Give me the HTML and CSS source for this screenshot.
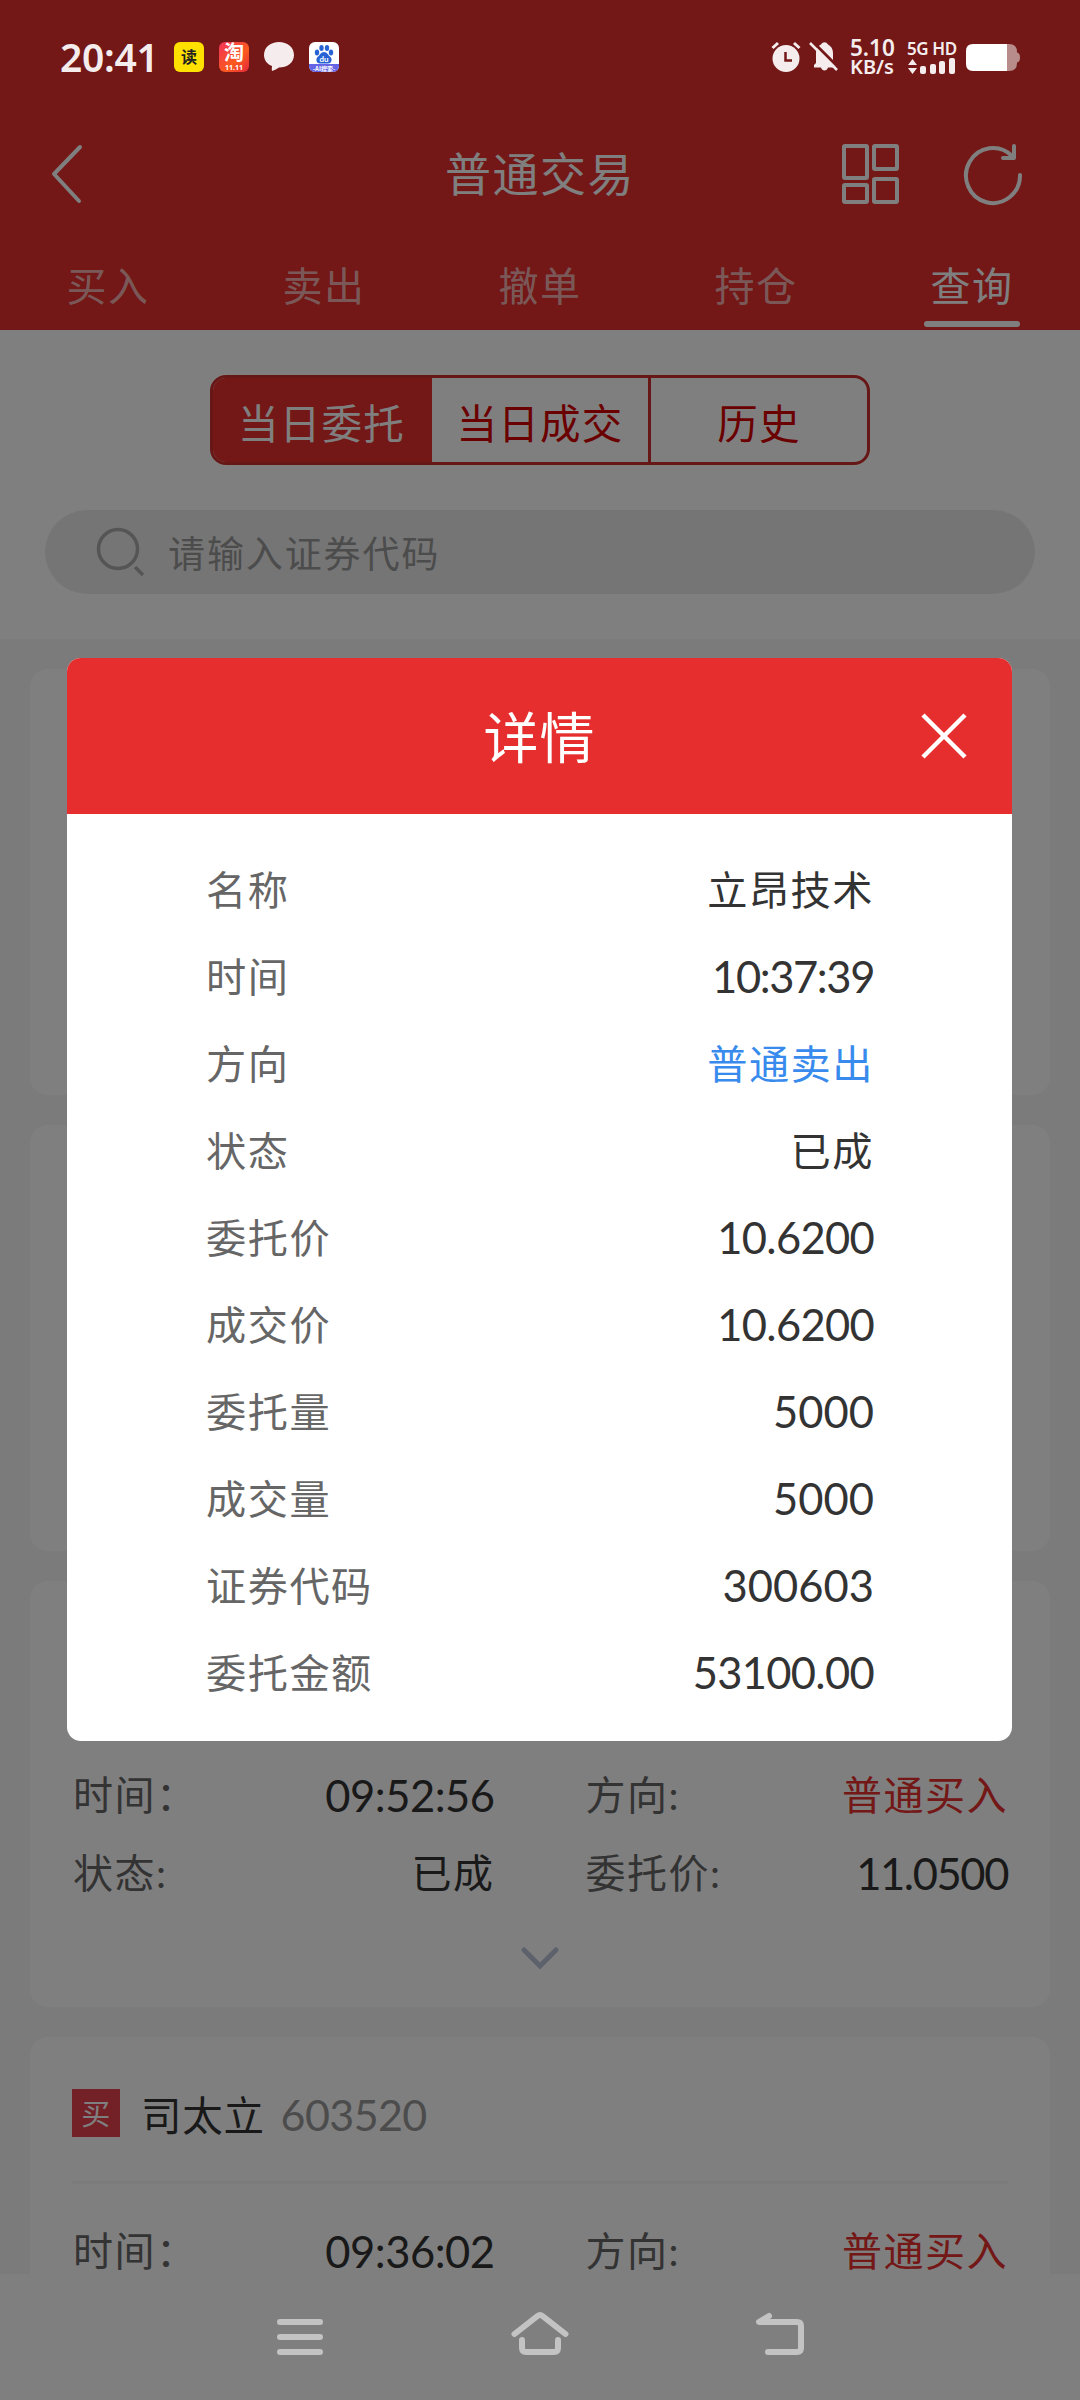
FILE: index.html
```html
<!DOCTYPE html>
<html lang="zh-CN">
<head>
  <meta charset="UTF-8">
  <title>普通交易</title>
  <link rel="stylesheet" href="styles.css">
</head>
<body>
  <div class="screen">
    <header class="header">
      <div class="title-bar">
        <svg class="back" width="40" height="64" viewBox="0 0 40 64"><path d="M33 5L7 32L32 59"/></svg>
        <h1>普通交易</h1>
        <div class="actions">
          <svg width="60" height="64" viewBox="0 0 60 64">
            <rect x="3" y="4" width="23" height="32" rx="1"/>
            <rect x="33" y="4" width="23" height="23" rx="1"/>
            <rect x="3" y="43" width="23" height="17" rx="1"/>
            <rect x="33" y="37" width="23" height="23" rx="1"/>
          </svg>
          <svg width="64" height="64" viewBox="0 0 64 64"><path d="M58 33A27 27.500 0 1 1 50 14M52 4V16H41"/></svg>
        </div>
      </div>
      <nav class="tabs">
        <span>买入</span>
        <span>卖出</span>
        <span>撤单</span>
        <span>持仓</span>
        <span class="active">查询</span>
      </nav>
    </header>

    <section class="filters">
      <div class="segment">
        <span class="active">当日委托</span>
        <span>当日成交</span>
        <span>历史</span>
      </div>
      <div class="search">
        <svg width="50" height="50" viewBox="0 0 50 50"><circle cx="23" cy="22" r="19.500"/><path d="M40 40L48 48"/></svg>
        <span>请输入证券代码</span>
      </div>
    </section>

    <main class="list">
      <div class="card"></div>
      <div class="card"></div>
      <div class="card">
        <div class="card-head"></div>
        <div class="card-body">
          <div class="cell"><span>时间：</span><b class="time">09:52:56</b></div>
          <div class="cell"><span>方向:</span><b class="buy">普通买入</b></div>
          <div class="cell"><span>状态:</span><b>已成</b></div>
          <div class="cell"><span>委托价:</span><b class="num tight">11.0500</b></div>
        </div>
        <div class="more">
          <svg width="44" height="28" viewBox="0 0 44 28"><path d="M6 5L22 21L38 5"/></svg>
        </div>
      </div>
      <div class="card">
        <div class="card-head">
          <i class="badge">买</i><b>司太立</b><span class="code">603520</span>
        </div>
        <div class="card-body">
          <div class="cell"><span>时间：</span><b class="time">09:36:02</b></div>
          <div class="cell"><span>方向:</span><b class="buy">普通买入</b></div>
        </div>
      </div>
    </main>
    <div class="nav-bg"></div>

    <div class="overlay">
      <div class="modal">
        <div class="modal-head">
          <h2>详情</h2>
          <svg class="close" width="50" height="50" viewBox="0 0 50 50"><path d="M4 3L46 45M46 3L4 45"/></svg>
        </div>
        <div class="modal-body">
          <div class="row"><span>名称</span><b>立昂技术</b></div>
          <div class="row"><span>时间</span><b class="time tight">10:37:39</b></div>
          <div class="row"><span>方向</span><b class="sell">普通卖出</b></div>
          <div class="row"><span>状态</span><b>已成</b></div>
          <div class="row"><span>委托价</span><b class="num snug">10.6200</b></div>
          <div class="row"><span>成交价</span><b class="num snug">10.6200</b></div>
          <div class="row"><span>委托量</span><b class="num">5000</b></div>
          <div class="row"><span>成交量</span><b class="num">5000</b></div>
          <div class="row"><span>证券代码</span><b class="num">300603</b></div>
          <div class="row"><span>委托金额</span><b class="num snug">53100.00</b></div>
        </div>
      </div>
    </div>

    <div class="status">
      <span class="clock">20:41</span>
      <div class="apps">
        <i class="app read">读</i>
        <i class="app tao"><span>淘</span><small>11.11</small></i>
        <svg width="30" height="30" viewBox="0 0 30 30"><path d="M15 0C23 0 30 5 30 13S23 25.500 15 25.500Q12 27.500 8 29Q7.500 27 8 24C3 22 0 18 0 13C0 5 7 0 15 0Z" fill="#f5eded"/></svg>
        <svg width="30" height="30" viewBox="0 0 30 30">
          <rect width="30" height="30" rx="6" fill="#fff"/>
          <path d="M0 22H30V24A6 6 0 0 1 24 30H6A6 6 0 0 1 0 24Z" fill="#6564e4"/>
          <g fill="#2863d6">
            <ellipse cx="8" cy="10.500" rx="2.200" ry="3"/><ellipse cx="12.500" cy="6" rx="2.200" ry="3"/>
            <ellipse cx="18" cy="6" rx="2.200" ry="3"/><ellipse cx="22" cy="10.500" rx="2.200" ry="3"/>
            <path d="M15 10C18 10 19 13 21.500 15C24 18 22 22 18.500 21.500H11.500C8 22 6 18 8.500 15C11 13 12 10 15 10Z"/>
          </g>
          <text x="15" y="20" class="du">du</text>
          <text x="15" y="28.500" class="ai">-AI搜索-</text>
        </svg>
      </div>
      <div class="indicators">
        <svg width="30" height="32" viewBox="0 0 30 32">
          <circle cx="15" cy="17.500" r="13.500" fill="#f5eded"/>
          <path d="M1.500 7L7 2M28.500 7L23 2" stroke="#f5eded" stroke-width="3" fill="none"/>
          <path d="M14.500 11V19.500H21" stroke="#731717" stroke-width="2.500" fill="none"/>
        </svg>
        <svg class="bell" width="30" height="32" viewBox="0 0 30 32">
          <path d="M5 26.500V24L7 22V12C7 6 11 4 12 3.500C14 .5 17 .5 19 3.500C22 5 24 8 24 12V22L26.500 24.500V26.500H19C18 30.500 13 30.500 12 26.500Z" fill="#f5eded"/>
          <path d="M4 1L31 28" stroke="#731717" stroke-width="3"/>
          <path d="M1 2L28 29" stroke="#f5eded" stroke-width="2.500"/>
        </svg>
        <div class="speed"><span>5.10</span><span class="unit">KB/s</span></div>
        <div class="net">
          <span>5G HD</span>
          <svg width="48" height="18" viewBox="0 0 48 18" fill="#f5eded">
            <path d="M1 8L5.500 2L10 8ZM1 11L5.500 17L10 11Z"/>
            <rect x="13" y="9" width="6" height="8" rx="2"/><rect x="23" y="7" width="6" height="10" rx="2"/>
            <rect x="32" y="4" width="6" height="13" rx="2"/><rect x="42" y="1" width="6" height="16" rx="2"/>
          </svg>
        </div>
        <svg class="battery" width="54" height="27" viewBox="0 0 54 27">
          <path d="M41 0H43Q51 0 51 8V8.500Q54 9 54 13.500T51 18.500V19Q51 27 43 27H41Z" fill="#b98c8c"/>
          <path d="M7 0H41V27H7Q0 27 0 20V7Q0 0 7 0Z" fill="#fff"/>
        </svg>
      </div>
    </div>

    <div class="sys-nav">
      <svg width="60" height="60" viewBox="0 0 60 60"><path d="M10 15H50M10 30H50M10 45H50"/></svg>
      <svg width="60" height="60" viewBox="0 0 60 60"><path d="M4.500 27L27.500 9Q30 7 32.500 9L55.500 27M12 33V41Q12 45 16 45H44Q48 45 48 41V33"/></svg>
      <svg width="60" height="60" viewBox="0 0 60 60"><path d="M19 9L9 15H47Q51 15 51 19V41Q51 45 47 45H18"/></svg>
    </div>
  </div>
</body>
</html>
```

FILE: styles.css
```css
* { box-sizing: border-box; }
body { margin: 0; font-family: Lato, "Noto Sans CJK SC", sans-serif; }
h1, h2, b, i { font-weight: normal; font-style: normal; margin: 0; }
svg { display: block; flex: none; }

.screen {
  position: relative; width: 1080px; height: 2400px; overflow: hidden;
  display: flex; flex-direction: column; background: #f6f6f6;
}

/* header */
.header { height: 330px; flex: none; padding-top: 118px; background: #e62e2e; color: #fff; }
.header svg { fill: none; stroke: #fff; stroke-width: 4; stroke-linecap: round; stroke-linejoin: round; }
.title-bar {
  height: 112px; padding: 0 54px 0 47px;
  display: grid; grid-template-columns: 1fr auto 1fr; align-items: center;
}
.title-bar h1 { margin-left: 7px; font-size: 46px; letter-spacing: 1.5px; line-height: 108px; }
.actions { display: flex; gap: 61px; justify-content: flex-end; }
.tabs { display: flex; height: 100px; }
.tabs span {
  flex: 1; display: flex; flex-direction: column; align-items: center;
  font-size: 40px; letter-spacing: 1.5px; line-height: 112px; height: 100px;
  color: rgba(255, 255, 255, .65);
}
.tabs .active { color: #fff; }
.tabs .active::after {
  content: ""; width: 96px; height: 6px; margin-top: -21px; border-radius: 3px; background: #fff;
}

/* filters */
.filters { height: 309px; flex: none; padding: 45px 45px 0; background: #fff; }
.segment {
  display: flex; width: 660px; height: 90px; margin: 0 auto 45px;
  border: 3px solid #cf302c; border-radius: 16px; overflow: hidden;
}
.segment span {
  width: 216px; text-align: center; font-size: 40.5px; letter-spacing: 1.2px;
  line-height: 91px; color: #d60000;
}
.segment span:first-child { width: 219px; padding-right: 2px; }
.segment span:last-child { width: 219px; border-left: 3px solid #cf302c; }
.segment .active { background: #e62e2e; color: #fff; }
.search {
  display: flex; align-items: center; height: 84px; padding-left: 50px;
  border-radius: 42px; background: #ebebeb; color: #999; font-size: 37px; letter-spacing: 1.9px;
}
.search svg { fill: none; stroke: #aaa; stroke-width: 3.5; margin-right: 23px; }
.search span { line-height: 84px; padding-top: 3px; }

/* order list */
.list { flex: 1; min-height: 0; overflow: hidden; padding: 30px 30px 0; display: flex; flex-direction: column; gap: 30px; }
.card { height: 426px; flex: none; padding: 0 42px; border-radius: 18px; background: #fff; color: #333; }
.card-head {
  height: 147px; display: flex; align-items: center; padding-top: 8px; border-bottom: 3px solid #f6f6f6;
  font-size: 40.5px; letter-spacing: .7px;
}
.card-head b { margin-left: 21px; }
.badge { width: 48px; height: 48px; background: #e9404e; color: #fff; font-size: 29px; line-height: 50px; text-align: center; }
.code { font-size: 43px; letter-spacing: -.6px; color: #999; margin-left: 16px; padding-top: 2px; }
.card-body { display: grid; grid-template-columns: 1fr 1fr; column-gap: 90px; padding: 28px 0 0 1px; }
.cell { display: flex; justify-content: space-between; height: 78px; line-height: 78px; font-size: 40px; letter-spacing: 1.5px; }
.cell span { color: #666; }
.cell:nth-child(odd) { padding-right: 1px; }
.buy { color: #e62e2e; }
.more { display: flex; justify-content: center; padding-top: 33px; }
.more svg { fill: none; stroke: #b9c3d9; stroke-width: 5; stroke-linecap: round; }
.num { font-size: 43.5px; letter-spacing: 0; }
.time { font-size: 43.5px; letter-spacing: -.5px; }
.snug { letter-spacing: -.7px; }
.tight { letter-spacing: -1.4px; }
.nav-bg { height: 126px; flex: none; background: #fff; }

/* detail dialog */
.overlay {
  position: absolute; inset: 0; background: rgba(0, 0, 0, .5);
  display: flex; justify-content: center; align-items: flex-start; padding: 658px 1px 0 0;
}
.modal { width: 945px; height: 1083px; border-radius: 14px; background: #fff; overflow: hidden; }
.modal-head {
  height: 156px; padding-right: 43px; background: #e62e2e; color: #fff;
  display: grid; grid-template-columns: 1fr auto 1fr; align-items: center;
}
.modal-head h2 { grid-column: 2; margin-left: 43px; font-size: 55px; letter-spacing: 1px; line-height: 158px; }
.close { justify-self: end; fill: none; stroke: #fff; stroke-width: 4.5; }
.modal-body { padding: 32px 138px 0 139px; }
.row { display: flex; justify-content: space-between; height: 87px; line-height: 87px; font-size: 40.2px; letter-spacing: 1.5px; color: #333; }
.row span { color: #666; }
.row .sell { color: #388bed; }

/* system bars */
.status {
  position: absolute; top: 28px; left: 60px; right: 60px; height: 60px;
  display: flex; align-items: center; color: #f5eded; font-family: "Noto Sans", "Noto Sans CJK SC", sans-serif;
}
.clock { width: 114px; font-size: 39px; font-weight: 600; line-height: 56px; margin-top: -3px; letter-spacing: -.3px; }
.apps { display: flex; gap: 15px; margin-top: -2px; }
.app { width: 30px; height: 30px; border-radius: 6px; text-align: center; }
.read { background: #ffe100; color: #222; font-size: 16px; font-weight: bold; line-height: 30px; }
.tao { display: flex; flex-direction: column; background: linear-gradient(135deg, #f0335a, #fb5a1e 60%, #e5263d); color: #fff; font-weight: bold; }
.tao span { height: 22px; font-size: 20px; line-height: 22px; }
.tao small { height: 8px; font-size: 7px; line-height: 8px; }
.du { font: bold 8px Lato, sans-serif; fill: #fff; text-anchor: middle; }
.ai { font: bold 6px "Noto Sans CJK SC", sans-serif; fill: #fff; text-anchor: middle; }
.indicators { display: flex; align-items: center; margin: -2px 0 0 auto; }
.bell { margin-left: 8px; }
.speed { width: 45px; margin-left: 11px; display: flex; flex-direction: column; font-weight: 600; font-size: 22.5px; line-height: 19px; white-space: nowrap; }
.speed .unit { font-size: 20px; line-height: 19px; }
.net { width: 48px; margin-left: 12px; font-weight: 600; font-size: 17px; line-height: 17px; white-space: nowrap; }
.net span { display: block; letter-spacing: -.4px; }
.battery { margin-left: 11px; }
.sys-nav {
  position: absolute; left: 180px; right: 180px; bottom: 33px;
  display: flex; justify-content: space-around;
}
.sys-nav svg { fill: none; stroke: #c3c3c3; stroke-width: 6; stroke-linecap: round; stroke-linejoin: round; }
```
